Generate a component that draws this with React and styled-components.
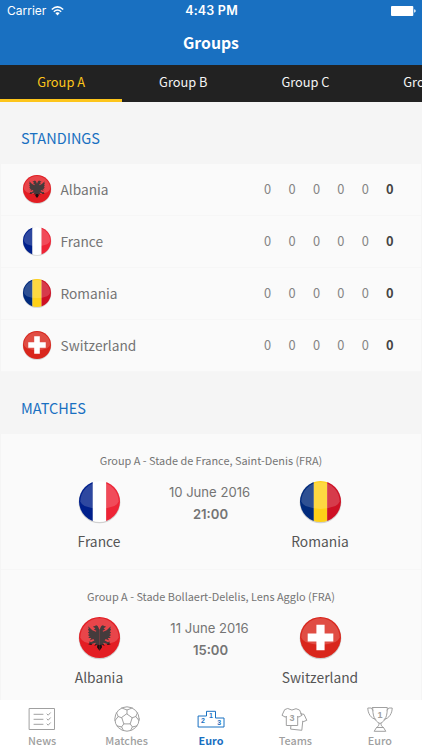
import { useState } from "react";
import styled, { createGlobalStyle, ThemeProvider } from "styled-components";

const theme = {
  blue: "#1970c1",
  dark: "#222222",
  yellow: "#fdc51b",
  page: "#f5f5f5",
  card: "#fafafa",
  line: "#f6f6f6",
  text: "#747474",
  strong: "#555555",
  muted: "#a0a0a0",
  sans: '"Noto Sans CJK SC", "Noto Sans", sans-serif',
  system: 'Inter, "Liberation Sans", sans-serif',
};

const GlobalStyle = createGlobalStyle`
  * {
    box-sizing: border-box;
  }
  body {
    margin: 0;
    overflow: hidden;
  }
`;

const Screen = styled.div`
  display: flex;
  flex-direction: column;
  width: 422px;
  height: 750px;
  overflow: hidden;
  background-color: ${(props) => props.theme.page};
  color: ${(props) => props.theme.text};
  font-family: ${(props) => props.theme.sans};
`;

const Header = styled.header`
  flex: none;
  height: 65px;
  color: white;
  background-color: ${(props) => props.theme.blue};
`;

const StatusBar = styled.div`
  display: grid;
  grid-template-columns: 1fr auto 1fr;
  align-items: center;
  height: 22px;
  padding: 0 6px 0 7px;
  font-family: ${(props) => props.theme.system};
  font-size: 12.5px;
  line-height: 22px;
`;

const Carrier = styled.span`
  display: flex;
  align-items: center;
  gap: 5px;
  font-size: 12px;
`;

const Clock = styled.span`
  font-weight: 600;
  letter-spacing: 0.2px;
`;

const BatteryIcon = styled.svg`
  justify-self: end;
`;

const Title = styled.h1`
  margin: 0;
  font-size: 15.8px;
  font-weight: 700;
  line-height: 41px;
  text-align: center;
`;

const GroupTabs = styled.nav`
  display: flex;
  flex: none;
  height: 37px;
  overflow: hidden;
  background-color: ${(props) => props.theme.dark};
`;

const GroupTab = styled.button`
  flex: none;
  width: 122.2px;
  padding: 0;
  border: none;
  border-bottom: 3px solid
    ${(props) => (props.$active ? props.theme.yellow : "transparent")};
  background: none;
  color: ${(props) => (props.$active ? props.theme.yellow : "#f4f4f4")};
  font-family: inherit;
  font-size: 12.8px;
  line-height: 34px;
  cursor: pointer;
`;

const Content = styled.main`
  flex: 1;
  min-height: 0;
  overflow: hidden;
`;

const SectionTitle = styled.h2`
  height: 62px;
  margin: 0;
  padding: 5px 21px 0;
  color: ${(props) => props.theme.blue};
  font-size: 14.5px;
  font-weight: 400;
  line-height: 62px;
`;

const List = styled.div`
  margin: 0 1px;
  background-color: ${(props) => props.theme.card};
`;

const StandingRow = styled.div`
  display: flex;
  align-items: center;
  height: 52px;
  padding: 0 19px 1px 22px;
  border-bottom: 1px solid ${(props) => props.theme.line};
`;

const TeamName = styled.span`
  flex: 1;
  margin-left: 9.5px;
  font-size: 13.7px;
  line-height: 20px;
`;

const Stat = styled.span`
  width: 24.45px;
  color: ${(props) => (props.$total ? "#444444" : "#858585")};
  font-size: 12.8px;
  font-weight: ${(props) => (props.$total ? 700 : 400)};
  line-height: 20px;
  text-align: center;
`;

const MatchCard = styled.article`
  height: 135.5px;
  padding-top: 16px;
  border-bottom: 1px solid ${(props) => props.theme.line};
`;

const Venue = styled.p`
  margin: 0 0 11px;
  font-size: 10.9px;
  line-height: 20px;
  text-align: center;
`;

const MatchBody = styled.div`
  display: grid;
  grid-template-columns: 110px 111px 110px;
  justify-content: center;
  padding-right: 3px;
`;

const MatchTeam = styled.div`
  display: flex;
  flex-direction: column;
  align-items: center;
  color: ${(props) => props.theme.strong};
  font-size: 13.8px;
  line-height: 20px;
  gap: 9px;
`;

const Kickoff = styled.div`
  font-family: ${(props) => props.theme.system};
  font-size: 13.1px;
  line-height: 22px;
  text-align: center;
  white-space: nowrap;
`;

const KickoffTime = styled.div`
  padding-left: 2px;
  font-weight: 600;
`;

const BottomBar = styled.nav`
  display: grid;
  grid-template-columns: repeat(5, 84.4px);
  flex: none;
  height: 50px;
  background-color: white;
`;

const BottomItem = styled.button`
  display: flex;
  flex-direction: column;
  align-items: center;
  padding: 5px 0 0;
  border: none;
  background: none;
  color: ${(props) => (props.$active ? props.theme.blue : props.theme.muted)};
  font-family: inherit;
  font-size: 10.8px;
  font-weight: ${(props) => (props.$active ? 700 : 500)};
  line-height: 16px;
  cursor: pointer;
`;

const Icon = styled.svg`
  flex: none;
  width: 28px;
  height: 28px;
  margin-bottom: -1px;
  overflow: visible;
  fill: none;
  stroke: currentColor;
  stroke-width: 1;
  stroke-linejoin: round;
  stroke-linecap: round;
`;

const IconNumber = styled.text`
  fill: currentColor;
  stroke: none;
  font-family: "Liberation Sans", sans-serif;
  font-size: ${(props) => props.$size || 7}px;
  font-weight: 700;
  text-anchor: middle;
`;

const FlagIcon = styled.svg`
  flex: none;
  display: block;
  overflow: visible;
`;

const eagleHalf =
  "M20 12.5 C19 11 19 8.5 17 8 L13.5 9.5 L16 11 L14.5 12.5 L17 13.5 L16.5 14.5 L13 13 L9 9 L9.5 11.5 L8.7 12.5 L10 14 L8.7 15 L10.2 16.5 L8.7 17.5 L10.5 19 L9 20.5 L12 20.5 L10.5 23 L14 21.5 L15 23 L12 24.5 L9.5 24 L10.5 25.7 L9 26.6 L12 27.2 L13 26 L16.5 25 L15 28 L18 27 L17.5 29.5 L20 33 Z";

const flags = {
  Albania: (
    <>
      <rect width="40" height="40" fill="#e31d23" />
      <g fill="#1c1012">
        <path d={eagleHalf} />
        <path d={eagleHalf} transform="translate(40 0) scale(-1 1)" />
      </g>
    </>
  ),
  France: (
    <>
      <rect width="13.5" height="40" fill="#00208c" />
      <rect x="13.5" width="13" height="40" fill="#ffffff" />
      <rect x="26.5" width="13.5" height="40" fill="#ee2436" />
    </>
  ),
  Romania: (
    <>
      <rect width="13.5" height="40" fill="#002a7c" />
      <rect x="13.5" width="13" height="40" fill="#fed018" />
      <rect x="26.5" width="13.5" height="40" fill="#ce1024" />
    </>
  ),
  Switzerland: (
    <>
      <rect width="40" height="40" fill="#d9261c" />
      <path d="M16 7.5h8V16h8.5v8H24v8.5h-8V24H7.5v-8H16z" fill="#ffffff" />
    </>
  ),
};

const Flag = ({ team, size, id }) => (
  <FlagIcon width={size} height={size} viewBox="0 0 40 40">
    <defs>
      <clipPath id={id}>
        <circle cx="20" cy="20" r="20" />
      </clipPath>
    </defs>
    <circle cx="20" cy="20.8" r="20.4" fill="#000000" opacity="0.16" />
    <g clipPath={`url(#${id})`}>
      {flags[team]}
      <path
        d="M1.3 20 A18.7 18.7 0 0 1 38.7 20 Q37.5 23 34.5 24.5 Q20 30 5.5 24.5 Q2.5 23 1.3 20Z"
        fill="#ffffff"
        opacity="0.18"
      />
    </g>
  </FlagIcon>
);

const WifiIcon = () => (
  <svg width="13" height="10" viewBox="0 0 13 10" fill="none" stroke="white">
    <path d="M0.8 3.5Q6.5 -1.7 12.2 3.5" strokeWidth="1.5" />
    <path d="M2.8 5.7Q6.5 2.4 10.2 5.7" strokeWidth="1.5" />
    <path d="M4.3 7.1Q6.5 5.3 8.7 7.1L6.5 9.4Z" fill="white" stroke="none" />
  </svg>
);

const NewsIcon = () => (
  <Icon viewBox="0 0 28 28">
    <rect x="1.5" y="3.5" width="25" height="21" />
    <path d="M6 9.3h9M6 14.3h9M6 19.3h9" />
    <path d="M19 9l1.2 1.2 2.2-2.4M19 14l1.2 1.2 2.2-2.4M19 19l1.2 1.2 2.2-2.4" />
  </Icon>
);

const BallIcon = () => (
  <Icon viewBox="0 0 28 28">
    <circle cx="14" cy="14" r="12.2" />
    <path d="M14 9l5.2 3.8-2 6.1h-6.4l-2-6.1z" />
    <path d="M14 9V5M19.2 12.8l3.6-1.3M17.2 18.9l2.2 3M10.8 18.9l-2.2 3M8.8 12.8l-3.6-1.3" />
    <path d="M8.8 3L14 5l5.2-2M24.5 7.8l-1.7 3.7 3.2 4.1M24 20.9l-4.6 1-1.9 3.7M10.5 25.6l-1.9-3.7-4.6-1M2 15.6l3.2-4.1-1.7-3.7" />
  </Icon>
);

const PodiumIcon = () => (
  <Icon viewBox="0 0 28 28">
    <path d="M1.5 11h8V6.3h9V13H27v9H1.5z" />
    <IconNumber x="14" y="13.4" $size={7}>1</IconNumber>
    <IconNumber x="5.9" y="18.2" $size={7}>2</IconNumber>
    <IconNumber x="22.3" y="20" $size={7}>3</IconNumber>
  </Icon>
);

const ShirtsIcon = () => (
  <Icon viewBox="0 0 28 28">
    <path d="M7 3.7Q11 6.5 15 3.7L18.5 5 21 10.3l-3.5 1.9-.8-1.2v9.5H5.3V11l-.8 1.2L1 10.3 3.5 5z" />
    <path d="M19.5 8.8l3.5.5 2.8 6-3.6 1.4-.4-.8-1 9.4-11.2-1.2.3-3.2" />
    <IconNumber x="11" y="15.8" $size={9}>3</IconNumber>
  </Icon>
);

const TrophyIcon = () => (
  <Icon viewBox="0 0 28 28">
    <path d="M6.7 2.5h14.6C21.3 10 20 16 14 18.5 8 16 6.7 10 6.7 2.5z" />
    <path d="M6.8 5.2L5.3 3H1.8c0 5 3 10.8 8 11.3M21.2 5.2L22.7 3h3.5c0 5-3 10.8-8 11.3" />
    <path d="M13 18.5c0 2-.7 3-2.5 4h7c-1.8-1-2.5-2-2.5-4M10.5 22.5l-2.3 3.8h11.6l-2.3-3.8" />
    <IconNumber x="14" y="13.4" $size={9}>1</IconNumber>
  </Icon>
);

const groups = ["Group A", "Group B", "Group C", "Group D"];

const standings = [
  { team: "Albania", stats: [0, 0, 0, 0, 0, 0] },
  { team: "France", stats: [0, 0, 0, 0, 0, 0] },
  { team: "Romania", stats: [0, 0, 0, 0, 0, 0] },
  { team: "Switzerland", stats: [0, 0, 0, 0, 0, 0] },
];

const matches = [
  {
    venue: "Group A - Stade de France, Saint-Denis (FRA)",
    home: "France",
    away: "Romania",
    date: "10 June 2016",
    time: "21:00",
  },
  {
    venue: "Group A - Stade Bollaert-Delelis, Lens Agglo (FRA)",
    home: "Albania",
    away: "Switzerland",
    date: "11 June 2016",
    time: "15:00",
  },
];

const menu = [
  { id: "news", label: "News", Glyph: NewsIcon },
  { id: "matches", label: "Matches", Glyph: BallIcon },
  { id: "groups", label: "Euro", Glyph: PodiumIcon },
  { id: "teams", label: "Teams", Glyph: ShirtsIcon },
  { id: "euro", label: "Euro", Glyph: TrophyIcon },
];

const App = () => {
  const [group, setGroup] = useState("Group A");
  const [page, setPage] = useState("groups");

  return (
    <ThemeProvider theme={theme}>
      <GlobalStyle />
      <Screen>
        <Header>
          <StatusBar>
            <Carrier>
              Carrier
              <WifiIcon />
            </Carrier>
            <Clock>4:43 PM</Clock>
            <BatteryIcon width="25" height="10" viewBox="0 0 25 10" fill="white">
              <rect width="22.3" height="10" rx="1" />
              <path d="M23.2 3.3q1.5 .3 1.5 1.7t-1.5 1.7z" />
            </BatteryIcon>
          </StatusBar>
          <Title>Groups</Title>
        </Header>
        <GroupTabs>
          {groups.map((name) => (
            <GroupTab
              key={name}
              $active={name === group}
              onClick={() => setGroup(name)}
            >
              {name}
            </GroupTab>
          ))}
        </GroupTabs>
        <Content>
          <SectionTitle>STANDINGS</SectionTitle>
          <List>
            {standings.map(({ team, stats }) => (
              <StandingRow key={team}>
                <Flag team={team} size={28} id={`row-${team}`} />
                <TeamName>{team}</TeamName>
                {stats.map((value, i) => (
                  <Stat key={i} $total={i === stats.length - 1}>
                    {value}
                  </Stat>
                ))}
              </StandingRow>
            ))}
          </List>
          <SectionTitle>MATCHES</SectionTitle>
          <List>
            {matches.map(({ venue, home, away, date, time }) => (
              <MatchCard key={venue}>
                <Venue>{venue}</Venue>
                <MatchBody>
                  <MatchTeam>
                    <Flag team={home} size={41} id={`match-${home}`} />
                    {home}
                  </MatchTeam>
                  <Kickoff>
                    {date}
                    <KickoffTime>{time}</KickoffTime>
                  </Kickoff>
                  <MatchTeam>
                    <Flag team={away} size={41} id={`match-${away}`} />
                    {away}
                  </MatchTeam>
                </MatchBody>
              </MatchCard>
            ))}
          </List>
        </Content>
        <BottomBar>
          {menu.map(({ id, label, Glyph }) => (
            <BottomItem
              key={id}
              $active={id === page}
              onClick={() => setPage(id)}
            >
              <Glyph />
              {label}
            </BottomItem>
          ))}
        </BottomBar>
      </Screen>
    </ThemeProvider>
  );
};

export default App;
